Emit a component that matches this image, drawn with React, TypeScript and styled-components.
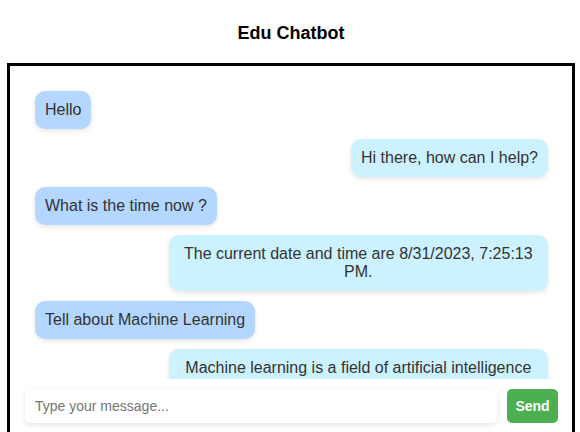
import React from "react";
import styled, { createGlobalStyle } from "styled-components";

const Global = createGlobalStyle`
  html, body { margin: 0; padding: 0; background: #fff; }
  body { font-family: "Liberation Sans", Arial, sans-serif; overflow: hidden; }
`;

const Page = styled.div`
  display: flex;
  flex-direction: column;
  align-items: flex-start;
  padding: 0 5px 0 7px;
`;

const Title = styled.h1`
  align-self: stretch;
  margin: 23px 0 19px;
  text-align: center;
  font-size: 18px;
  line-height: 21px;
  font-weight: bold;
  color: #000;
`;

const Frame = styled.div`
  width: 568px;
  box-sizing: border-box;
  border: 3px solid #000;
  display: flex;
  flex-direction: column;
`;

const Messages = styled.div`
  height: 313px;
  overflow: hidden;
  box-sizing: border-box;
  padding: 20px 10px;
  display: flex;
  flex-direction: column;
`;

const Bubble = styled.div<{ $from: "user" | "bot" }>`
  align-self: ${(p) => (p.$from === "user" ? "flex-start" : "flex-end")};
  box-sizing: border-box;
  max-width: 70%;
  margin: 5px 14px 5px ${(p) => (p.$from === "user" ? "15px" : "0")};
  padding: 10px;
  border-radius: 10px;
  background: ${(p) => (p.$from === "user" ? "#b3d7ff" : "#ccf2ff")};
  box-shadow: 0 2px 5px rgba(0, 0, 0, 0.1);
  color: #333;
  font-size: 16px;
  line-height: 18px;
  text-align: center;
  flex-shrink: 0;
`;

const InputRow = styled.div`
  display: flex;
  gap: 10px;
  padding: 10px 14px 20px 15px;
`;

const Input = styled.input`
  flex: 1;
  height: 34px;
  box-sizing: border-box;
  border: none;
  outline: none;
  border-radius: 5px;
  padding: 0 10px;
  background: #fff;
  box-shadow: 0 2px 5px rgba(0, 0, 0, 0.1);
  font-family: "Liberation Sans", Arial, sans-serif;
  font-size: 14px;
  color: #333;
  &::placeholder { color: #757575; }
`;

const SendButton = styled.button`
  height: 34px;
  width: 51px;
  border: none;
  border-radius: 5px;
  background: #4caf50;
  color: #fff;
  font-family: "Liberation Sans", Arial, sans-serif;
  font-size: 14px;
  font-weight: bold;
  padding: 0;
  cursor: pointer;
`;

const messages: { from: "user" | "bot"; text: string }[] = [
  { from: "user", text: "Hello" },
  { from: "bot", text: "Hi there, how can I help?" },
  { from: "user", text: "What is the time now ?" },
  { from: "bot", text: "The current date and time are 8/31/2023, 7:25:13 PM." },
  { from: "user", text: "Tell about Machine Learning" },
  {
    from: "bot",
    text: "Machine learning is a field of artificial intelligence that focuses on developing algorithms which learn from data.",
  },
];

export default function App() {
  return (
    <>
      <Global />
      <Page>
        <Title>Edu Chatbot</Title>
        <Frame>
          <Messages>
            {messages.map((m, i) => (
              <Bubble key={i} $from={m.from}>
                {m.text}
              </Bubble>
            ))}
          </Messages>
          <InputRow>
            <Input placeholder="Type your message..." />
            <SendButton>Send</SendButton>
          </InputRow>
        </Frame>
      </Page>
    </>
  );
}
